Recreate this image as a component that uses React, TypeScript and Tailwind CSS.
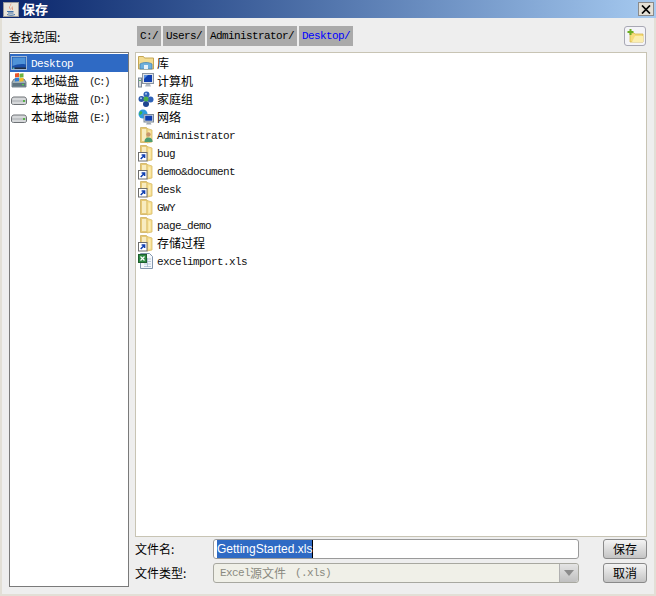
import React from "react";

const cjk = { fontFamily: '"Noto Sans CJK SC", sans-serif' };
const mono = { fontFamily: '"Liberation Mono", monospace', letterSpacing: "-0.6px" };

function Mono({ children, className = "" }: { children: React.ReactNode; className?: string }) {
  return (
    <span className={"text-[11px] leading-[18px] translate-y-px " + className} style={mono}>
      {children}
    </span>
  );
}
function Cjk({ children, className = "" }: { children: React.ReactNode; className?: string }) {
  return (
    <span className={"text-[12px] leading-[18px] " + className} style={cjk}>
      {children}
    </span>
  );
}

function Folder({ shortcut, person }: { shortcut?: boolean; person?: boolean }) {
  return (
    <svg width="16" height="18" viewBox="0 0 16 18" className="shrink-0">
      <path d="M2.500 1.500h6l1 1.500v13.500h-7z" fill="#e6c874" stroke="#cdb060" strokeWidth="0.8" />
      <path d="M4 3h4.500v12H4z" fill="#f8ecc0" />
      <path d="M9 2.500l5 1.500v12l-5 1z" fill="#f6dd8e" stroke="#d8bd68" strokeWidth="0.8" />
      <path d="M10.500 5l2 .5v9l-2 .5z" fill="#fbeeb6" />
      {person && (
        <>
          <circle cx="10.500" cy="8.500" r="2.200" fill="#c8956a" />
          <path d="M6.500 16c0-3.500 2-4.500 4-4.500s4 1 4 4.500z" fill="#4c9c72" />
        </>
      )}
      {shortcut && (
        <>
          <rect x="0.500" y="8.500" width="8.500" height="8.500" fill="#fff" stroke="#6e6e6e" />
          <path d="M2.700 15l3.200-3.200M3.600 11h3v3" stroke="#1040b0" strokeWidth="1.500" fill="none" />
        </>
      )}
    </svg>
  );
}

function Library() {
  return (
    <svg width="16" height="16" viewBox="0 0 16 16" className="shrink-0">
      <path d="M0.500 3V1.500h5l1 1.500h9v11h-15z" fill="#f3dc92" stroke="#c4a654" />
      <path d="M2 14V9c3-2 9-2 12 0v5z" fill="#6fb0dc" stroke="#3d7cb0" strokeWidth="0.7" />
      <rect x="6" y="10" width="4" height="4" fill="#e8f2fa" />
    </svg>
  );
}

function Computer() {
  return (
    <svg width="16" height="16" viewBox="0 0 16 16" className="shrink-0">
      <rect x="0.500" y="5" width="3" height="9" fill="#d8dce0" stroke="#7b8794" />
      <rect x="1.200" y="7" width="1.600" height="1" fill="#3fae49" />
      <rect x="4.500" y="0.500" width="11" height="10" fill="#dfe3e8" stroke="#8a94a0" />
      <rect x="6" y="2" width="8" height="7" fill="#0f3fb0" />
      <path d="M6 2h4l-4 4z" fill="#5a90e0" />
      <path d="M8 11h4l1 2.500H7z" fill="#b0b8c0" />
    </svg>
  );
}

function HomeGroup() {
  return (
    <svg width="16" height="16" viewBox="0 0 16 16" className="shrink-0">
      <circle cx="8.500" cy="3.500" r="3" fill="#2f62b8" />
      <circle cx="3.500" cy="8" r="3" fill="#2a58a8" />
      <circle cx="12.500" cy="8.500" r="3" fill="#2f62b8" />
      <circle cx="8" cy="13" r="3" fill="#1f4690" />
      <circle cx="8" cy="8" r="2.500" fill="#4cb04a" />
      <circle cx="8" cy="2.800" r="1" fill="#a8c8f0" />
      <circle cx="3" cy="7.200" r="1" fill="#a8c8f0" />
    </svg>
  );
}

function Network() {
  return (
    <svg width="16" height="16" viewBox="0 0 16 16" className="shrink-0">
      <circle cx="5" cy="5" r="4.500" fill="#2e9adf" />
      <path d="M2 2.500c2-1 3 1 2 2s-2 2-3 1zM6 5c2-1 3 1 3 2l-2 1z" fill="#3eb54a" />
      <rect x="6" y="5.500" width="9.500" height="7.500" fill="#d5dbe2" stroke="#7b8794" />
      <rect x="7.200" y="6.700" width="7" height="5" fill="#0f3fb0" />
      <path d="M9 13.500h3.500l1 2h-5.500z" fill="#a0a8b0" />
    </svg>
  );
}

function Excel() {
  return (
    <svg width="16" height="16" viewBox="0 0 16 16" className="shrink-0">
      <path d="M2.500 0.500h9l3 3v12h-12z" fill="#f4f7fb" stroke="#8296ae" />
      <path d="M6 6h7M6 8.500h7M6 11h7M6 13.500h7M9.500 5v9" stroke="#9db4cc" strokeWidth="0.7" />
      <rect x="0.500" y="1.500" width="8" height="8" fill="#2e8b45" stroke="#1e5e2e" />
      <path d="M2.500 3.500l4 4M6.500 3.500l-4 4" stroke="#fff" strokeWidth="1.200" />
    </svg>
  );
}

function MonitorIcon() {
  return (
    <svg width="16" height="16" viewBox="0 0 16 16" className="shrink-0">
      <rect x="0.500" y="1.500" width="15" height="13" fill="#1b4fa8" stroke="#9bb4d4" />
      <path d="M1.500 2.500h13v7c-4-1-9 0-13 1.500z" fill="#4f93d8" />
      <rect x="1" y="12.500" width="14" height="1.500" fill="#222c3c" />
      <rect x="1.500" y="12.500" width="2" height="1.500" fill="#4fb0d0" />
    </svg>
  );
}

function DriveWin() {
  return (
    <svg width="16" height="18" viewBox="0 0 16 18" className="shrink-0">
      <path d="M1 10l2-3h10l2 3v5H1z" fill="#9fb0b8" stroke="#5a6a74" strokeWidth="0.8" />
      <rect x="1.500" y="11" width="13" height="3.500" fill="#5f7480" />
      <rect x="11" y="12" width="2" height="1.200" fill="#4fd04f" />
      <rect x="4" y="1" width="4" height="4" fill="#e8562c" transform="skewY(-8) translate(0 1)" />
      <rect x="8.500" y="1" width="4" height="4" fill="#6cb33f" transform="skewY(-8) translate(0 2)" />
      <rect x="4" y="5.500" width="4" height="3.500" fill="#2f7fd8" transform="skewY(-8) translate(0 1)" />
      <rect x="8.500" y="5.500" width="4" height="3.500" fill="#f5bd26" transform="skewY(-8) translate(0 2)" />
    </svg>
  );
}

function Drive() {
  return (
    <svg width="16" height="18" viewBox="0 0 16 18" className="shrink-0">
      <path d="M0.500 10c0-2 1-3 2.500-3h10c1.500 0 2.500 1 2.500 3v3c0 1-1 1.500-2 1.500H2.500c-1 0-2-.5-2-1.500z" fill="#d6d8da" stroke="#6e7276" />
      <path d="M1 11h14" stroke="#a8acb0" />
      <rect x="12" y="10" width="2" height="2" fill="#57b04a" />
    </svg>
  );
}

function Crumb({ children, active }: { children: React.ReactNode; active?: boolean }) {
  return (
    <div className={"h-5 px-[3px] bg-[#aaaaaa] flex items-center " + (active ? "text-[#0000ff]" : "text-black")}>
      <span className="text-[11px]" style={mono}>{children}</span>
    </div>
  );
}

const drives = [
  { label: "(C:)", icon: <DriveWin /> },
  { label: "(D:)", icon: <Drive /> },
  { label: "(E:)", icon: <Drive /> },
];

const files: { icon: React.ReactNode; name: string; cn?: boolean }[] = [
  { icon: <Library />, name: "库", cn: true },
  { icon: <Computer />, name: "计算机", cn: true },
  { icon: <HomeGroup />, name: "家庭组", cn: true },
  { icon: <Network />, name: "网络", cn: true },
  { icon: <Folder person />, name: "Administrator" },
  { icon: <Folder shortcut />, name: "bug" },
  { icon: <Folder shortcut />, name: "demo&document" },
  { icon: <Folder shortcut />, name: "desk" },
  { icon: <Folder />, name: "GWY" },
  { icon: <Folder />, name: "page_demo" },
  { icon: <Folder shortcut />, name: "存储过程", cn: true },
  { icon: <Excel />, name: "excelimport.xls" },
];

function Btn({ children }: { children: React.ReactNode }) {
  return (
    <div
      className="w-[44px] h-5 rounded-[3px] border border-[#8a8a8a] bg-gradient-to-b from-[#f4f4f4] to-[#c4c4c4] flex items-center justify-center text-[12px] text-black"
      style={cjk}
    >
      {children}
    </div>
  );
}

export default function App() {
  return (
    <div className="w-[656px] h-[596px] bg-[#eeeeee] flex flex-col overflow-hidden">
      <div className="h-[18px] shrink-0 bg-gradient-to-r from-[#0a246a] to-[#a6caf0] flex items-center pl-[3px] pr-[2px]">
        <div className="w-[16px] h-[15px] bg-[#e8e4da] border border-[#9a9a9a] flex items-center justify-center shrink-0">
          <svg width="12" height="13" viewBox="0 0 12 13">
            <path d="M6 0c1 2-2 3-1 5 0 1 1 1 1 2-2-2-2-3-1-4 .5-1 1-2 1-3z" fill="#d8502a" />
            <path d="M8 3c-1 1-2 2-1 3 .5.5 0 1-.5 1.500 1-.5 1.500-1 1-2-.5-.7 0-1.500.5-2.500z" fill="#d8502a" />
            <path d="M2 8.500h6.500M3 10h5.500M2 11.500c2 1 6 1 8 0" stroke="#3f6fa8" strokeWidth="1" fill="none" />
          </svg>
        </div>
        <span className="ml-[3px] text-[13px] font-bold text-white leading-[18px]" style={cjk}>保存</span>
        <div className="ml-auto w-[16px] h-[14px] bg-[#e4e0d6] border border-[#8a8a8a] flex items-center justify-center">
          <svg width="10" height="9" viewBox="0 0 10 9">
            <path d="M1 0.500l8 8M9 0.500l-8 8" stroke="#000" strokeWidth="1.700" />
          </svg>
        </div>
      </div>

      <div className="flex-1 flex px-[7px] min-h-0 border-x-2 border-b-2 border-[#e2dfd6]">
        <div className="w-[120px] shrink-0 flex flex-col">
          <div className="h-[34px] flex items-center pt-[3px]">
            <span className="text-[12px] text-black" style={cjk}>查找范围:</span>
          </div>
          <div className="w-[120px] h-[535px] bg-white border border-[#7a7a7a] flex flex-col pt-px">
            <div className="h-[18px] bg-[#2f6ac4] flex items-center pl-px gap-1">
              <MonitorIcon />
              <Mono className="text-white">Desktop</Mono>
            </div>
            {drives.map((d) => (
              <div key={d.label} className="h-[18px] flex items-center pl-px gap-1">
                {d.icon}
                <Cjk className="text-black">本地磁盘</Cjk>
                <span className="ml-[6px] text-[11px] leading-[18px] translate-y-px text-[#222] tracking-[-1.600px]" style={{ fontFamily: '"Liberation Mono", monospace' }}>
                  {d.label}
                </span>
              </div>
            ))}
          </div>
        </div>

        <div className="flex-1 ml-[6px] flex flex-col min-w-0">
          <div className="h-[34px] flex items-center justify-between pt-[2px]">
            <div className="flex gap-[2px] pl-[2px]">
              <Crumb>C:/</Crumb>
              <Crumb>Users/</Crumb>
              <Crumb>Administrator/</Crumb>
              <Crumb active>Desktop/</Crumb>
            </div>
            <div className="w-[22px] h-5 mr-px rounded-[3px] border border-[#a8a8b4] bg-[#f4f4f8] flex items-center justify-center">
              <svg width="17" height="14" viewBox="0 0 17 14">
                <path d="M3 4h4l1 1h8v8H3z" fill="#f6dc7c" stroke="#d8b94c" strokeWidth="0.8" />
                <path d="M8 7h8v6H5z" fill="#fbeeb0" />
                <path d="M3.500 0v6M0.500 3h6" stroke="#6cae24" strokeWidth="2" />
              </svg>
            </div>
          </div>
          <div className="h-[485px] bg-white border border-[#c8c4b4] flex flex-col pt-px pl-[2px]">
            {files.map((f) => (
              <div key={f.name} className="h-[18px] flex items-center gap-[3px] shrink-0">
                {f.icon}
                {f.cn ? <Cjk className="text-black">{f.name}</Cjk> : <Mono className="text-[#111]">{f.name}</Mono>}
              </div>
            ))}
          </div>
          <div className="flex mt-[2px] h-[20px] items-center">
            <span className="w-[78px] text-[12px] text-black shrink-0" style={cjk}>文件名:</span>
            <div className="w-[366px] h-5 bg-white border border-[#9a9a9a] rounded-[3px] pl-[3px] flex items-center">
              <span
                className="bg-[#2f6ac4] text-white text-[12px] leading-[18px] border-r border-black"
                style={{ fontFamily: '"Liberation Sans", sans-serif' }}
              >
                GettingStarted.xls
              </span>
            </div>
            <div className="ml-auto"><Btn>保存</Btn></div>
          </div>
          <div className="flex mt-[4px] h-[20px] items-center">
            <span className="w-[78px] text-[12px] text-black shrink-0" style={cjk}>文件类型:</span>
            <div className="w-[366px] h-5 bg-[#f0f0e8] border border-[#a8a8a0] rounded-[3px] pl-[6px] flex items-center">
              <span className="text-[11px] text-[#8a8a80]" style={mono}>Excel</span>
              <span className="text-[12px] text-[#8a8a80]" style={cjk}>源文件</span>
              <span className="text-[11px] text-[#8a8a80] ml-[9px]" style={mono}>(.xls)</span>
              <div className="ml-auto w-[19px] h-full rounded-r-[3px] border-l border-[#b0b0b0] bg-gradient-to-b from-[#e4e4e4] to-[#c0c0c0] flex items-center justify-center">
                <svg width="10" height="6" viewBox="0 0 10 6"><path d="M0 0h10L5 6z" fill="#8c8c8c" /></svg>
              </div>
            </div>
            <div className="ml-auto"><Btn>取消</Btn></div>
          </div>
        </div>
      </div>
    </div>
  );
}
